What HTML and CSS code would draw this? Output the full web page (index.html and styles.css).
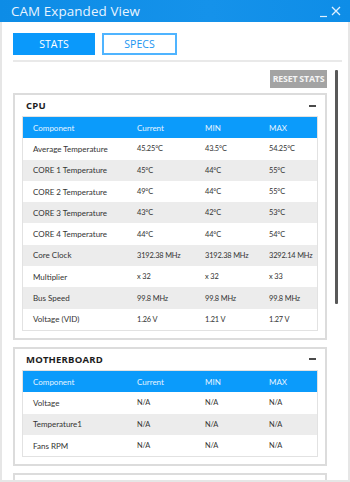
FILE: index.html
```html
<!DOCTYPE html>
<html>
<head>
<meta charset="utf-8">
<link rel="stylesheet" href="styles.css">
</head>
<body>
<div class="window">
  <div class="titlebar">
    <span class="title">CAM Expanded View</span>
    <span class="controls">
      <svg width="22" height="12" viewBox="0 0 22 12"><line x1="0" y1="10.5" x2="7" y2="10.5" stroke="#dff0ff" stroke-width="1.2"/><path d="M12 1 L20 9 M20 1 L12 9" stroke="#dff0ff" stroke-width="1.3"/></svg>
    </span>
  </div>
  <div class="body">
    <div class="tabs">
      <div class="tab active">STATS</div>
      <div class="tab">SPECS</div>
    </div>
    <div class="divider"></div>
    <div class="scroll">
      <div class="content">
        <div class="toolbar"><div class="reset">RESET STATS</div></div>
        <div class="panel">
          <div class="panel-head"><span class="panel-title">CPU</span><span class="minus"></span></div>
          <table class="grid">
            <tr class="hdr"><td>Component</td><td>Current</td><td>MIN</td><td>MAX</td></tr>
            <tr><td>Average Temperature</td><td>45.25°C</td><td>43.5°C</td><td>54.25°C</td></tr>
            <tr class="alt"><td>CORE 1 Temperature</td><td>45°C</td><td>44°C</td><td>55°C</td></tr>
            <tr><td>CORE 2 Temperature</td><td>49°C</td><td>44°C</td><td>55°C</td></tr>
            <tr class="alt"><td>CORE 3 Temperature</td><td>43°C</td><td>42°C</td><td>53°C</td></tr>
            <tr><td>CORE 4 Temperature</td><td>44°C</td><td>44°C</td><td>54°C</td></tr>
            <tr class="alt"><td>Core Clock</td><td>3192.38 MHz</td><td>3192.38 MHz</td><td>3292.14 MHz</td></tr>
            <tr><td>Multiplier</td><td>x 32</td><td>x 32</td><td>x 33</td></tr>
            <tr class="alt"><td>Bus Speed</td><td>99.8 MHz</td><td>99.8 MHz</td><td>99.8 MHz</td></tr>
            <tr><td>Voltage (VID)</td><td>1.26 V</td><td>1.21 V</td><td>1.27 V</td></tr>
          </table>
        </div>
        <div class="panel">
          <div class="panel-head"><span class="panel-title">MOTHERBOARD</span><span class="minus"></span></div>
          <table class="grid">
            <tr class="hdr"><td>Component</td><td>Current</td><td>MIN</td><td>MAX</td></tr>
            <tr><td>Voltage</td><td>N/A</td><td>N/A</td><td>N/A</td></tr>
            <tr class="alt"><td>Temperature1</td><td>N/A</td><td>N/A</td><td>N/A</td></tr>
            <tr><td>Fans RPM</td><td>N/A</td><td>N/A</td><td>N/A</td></tr>
          </table>
        </div>
        <div class="panel stub"></div>
      </div>
      <div class="scrollbar"><div class="thumb"></div></div>
    </div>
  </div>
</div>
</body>
</html>
```

FILE: styles.css
```css
html, body {
  margin: 0;
  padding: 0;
  background: #ffffff;
}
body {
  width: 350px;
  height: 482px;
  overflow: hidden;
  font-family: "Lato", "Open Sans", sans-serif;
}
.window {
  width: 350px;
  height: 482px;
  display: flex;
  flex-direction: column;
  box-sizing: border-box;
}
.titlebar {
  height: 22px;
  flex: none;
  background: linear-gradient(90deg, #0d8ce6, #1592ea 60%, #0e8de7);
  display: flex;
  align-items: center;
  justify-content: space-between;
  padding: 0 8px 0 11px;
}
.title {
  color: #e8f4ff;
  font-family: "Open Sans", sans-serif;
  font-size: 13.4px;
  letter-spacing: 0.1px;
}
.controls {
  display: flex;
  align-items: center;
  margin-top: 1px;
}
.body {
  flex: 1;
  border: 2px solid #e6e6e6;
  border-top: none;
  padding: 11px 6px 0 11px;
  display: flex;
  flex-direction: column;
  overflow: hidden;
}
.tabs {
  display: flex;
  gap: 7px;
}
.tab {
  width: 78px;
  height: 18px;
  border: 2px solid #4fb4ff;
  color: #1a95f0;
  font-family: "Open Sans", sans-serif;
  font-size: 10.5px;
  display: flex;
  align-items: center;
  justify-content: center;
  background: #fff;
}
.tab.active {
  width: 78px;
  background: #0a99fb;
  border-color: #0a99fb;
  color: #fff;
}
.tab + .tab {
  width: 71px;
}
.divider {
  height: 2px;
  background: #e9e9e9;
  margin-top: 5px;
}
.scroll {
  display: flex;
  flex: 1;
  margin-top: 8px;
  overflow: hidden;
}
.content {
  width: 314px;
  flex: none;
  display: flex;
  flex-direction: column;
  gap: 7px;
}
.toolbar {
  display: flex;
  justify-content: flex-end;
  margin-bottom: -2px;
}
.reset {
  background: #a3a3a3;
  color: #f4f4f4;
  font-family: "Open Sans", sans-serif;
  font-weight: 700;
  font-size: 8.8px;
  height: 18px;
  width: 57px;
  display: flex;
  align-items: center;
  justify-content: center;
  letter-spacing: -0.2px;
}
.scrollbar {
  width: 3px;
  margin-left: 8px;
}
.thumb {
  width: 3px;
  height: 234px;
  background: #595959;
  border-radius: 1px;
}
.panel {
  border: 2px solid #dcdcdc;
  padding: 0 7px 7px 7px;
  flex: none;
}
.panel.stub {
  height: 20px;
  border-bottom: none;
}
.panel-head {
  height: 21px;
  display: flex;
  align-items: center;
  justify-content: space-between;
  padding: 0 2px 0 4px;
}
.panel-title {
  font-family: "Open Sans", sans-serif;
  font-weight: 700;
  font-size: 9.5px;
  color: #1c1c1c;
  letter-spacing: 0.2px;
}
.minus {
  width: 7px;
  height: 2px;
  background: #4a4a4a;
}
.grid {
  width: 296px;
  border-collapse: collapse;
  border: 1px solid #e2e2e2;
  table-layout: fixed;
  font-size: 8px;
  color: #333;
}
.grid td {
  height: 21.3px;
  padding: 0;
  white-space: nowrap;
  vertical-align: middle;
}
.grid td:nth-child(1) { width: 104px; padding-left: 10px; }
.grid td:nth-child(2) { width: 68px; }
.grid td:nth-child(3) { width: 64px; }
.grid td:nth-child(n+2) {
  font-size: 7.4px;
  letter-spacing: -0.15px;
}
.grid tr.hdr td {
  background: #0b9bfb;
  color: #e6f4ff;
  font-size: 8px;
  letter-spacing: 0;
}
.grid tr.alt td {
  background: #ececec;
}
```
